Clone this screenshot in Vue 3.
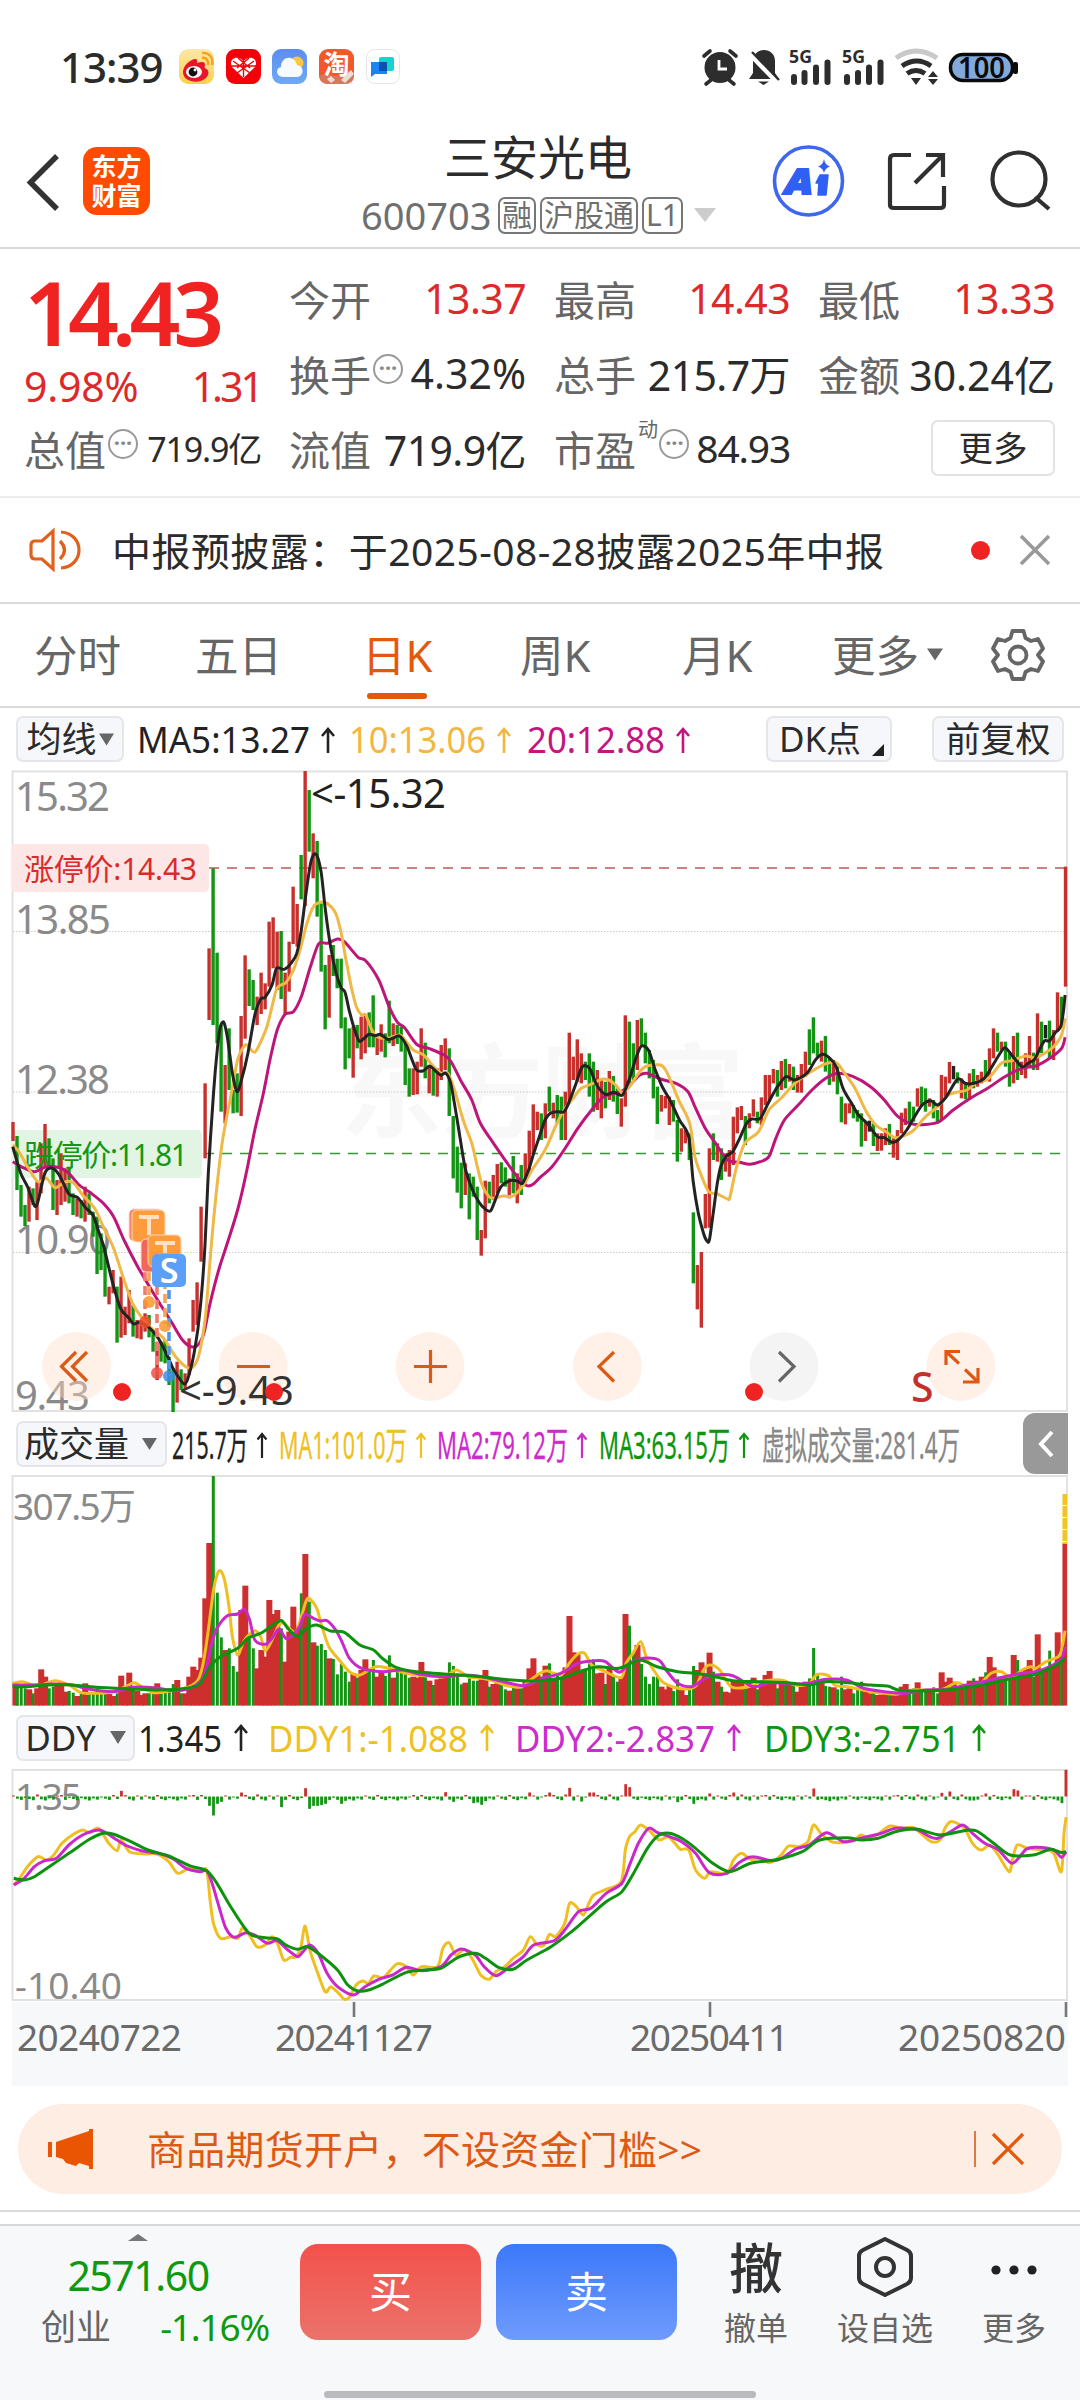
<template>
  <div class="page">
    <!-- 狀態列 -->
    <div class="status-bar">
      <span class="time">13:39</span>
      <svg class="status-apps" viewBox="179 46 222 42" width="222" height="42">
        <defs>
          <linearGradient id="wb" x1="0" y1="0" x2="0" y2="1"><stop offset="0" stop-color="#fde7a8" /><stop offset="1" stop-color="#fbd24a" /></linearGradient>
          <linearGradient id="sky" x1="0" y1="0" x2="0" y2="1"><stop offset="0" stop-color="#5d8df0" /><stop offset="1" stop-color="#6eaaf2" /></linearGradient>
        </defs>
        <rect x="179" y="49" width="35" height="35" rx="9" fill="url(#wb)" />
        <path d="M183 72c0-7 9-14 13-13 2 1 1 4 1 4s7-3 8 1c0 2-1 3 0 4 5 2 4 7 1 10-6 6-23 5-23-6z" fill="#e6162d" />
        <ellipse cx="194" cy="72" rx="8" ry="6" fill="#fff" />
        <circle cx="193" cy="72" r="4.4" fill="#111" /><circle cx="195" cy="70" r="1.4" fill="#fff" />
        <path d="M202 58c4-1 7 3 6 7M202 53c7-1 12 5 10 12" fill="none" stroke="#f7a11b" stroke-width="2.4" />
        <rect x="226" y="49" width="35" height="35" rx="9" fill="#f40009" />
        <path d="M243.500 78L232 67c-4-8 5-13 11.500-6 6.500-7 15.500-2 11.500 6z" fill="#fff" />
        <path d="M233 61l17 12M254 61l-17 12M238 58l12 10M249 58l-12 10M243.500 60v17M231 66h25" stroke="#f40009" stroke-width="1.400" />
        <rect x="272" y="49" width="35" height="35" rx="9" fill="url(#sky)" />
        <circle cx="297" cy="63" r="6.500" fill="#fbc646" />
        <path d="M283 77c-7 0-8-9-2-10 0-11 13-13 16-2 9 2 6 12 0 12z" fill="#f7fbff" />
        <rect x="319" y="49" width="35" height="35" rx="9" fill="#f1592a" />
        <path d="M319 76q8-4 14 0 10 0 14-7l7 8q-1 7-9 7h-17q-8 0-9-8z" fill="#d9775c" />
        <text x="336.500" y="74" font-size="26" font-weight="700" fill="#fff" text-anchor="middle">淘</text>
        <path d="M341 80l10-10 3 4-9 9zM327 79l4-3 4 4-4 3z" fill="#ecdcd4" />
        <rect x="366.500" y="49.500" width="33" height="34" rx="8" fill="#fff" stroke="#e6e6e6" />
        <rect x="379" y="57" width="15" height="14" rx="2" fill="#15d3cf" />
        <path d="M371 62h16v12h-12l-4 3z" fill="#1b83f5" />
        <rect x="379" y="62" width="8" height="9" fill="#0d50b4" />
      </svg>
      <svg class="status-icons" viewBox="698 46 326 42" width="326" height="42">
        <circle cx="720" cy="67.500" r="15.500" fill="#2d2d2d" />
        <path d="M704 56l6-5M736 56l-6-5M711 80l-5 4M729 80l5 4" stroke="#2d2d2d" stroke-width="3.600" stroke-linecap="round" />
        <path d="M719 60v9h8" fill="none" stroke="#fff" stroke-width="2.800" />
        <path d="M749 79l4-6V62c0-8 5-12 11-12 6 0 11 4 11 11v12l4 6zM758 81.500h11l-5.500 3.500z" fill="#2d2d2d" />
        <path d="M749 53l28 29" stroke="#fff" stroke-width="5" />
        <path d="M752 52l27 28" stroke="#2d2d2d" stroke-width="2.400" />
        <text x="789" y="62.500" font-size="17.500" font-weight="700" fill="#2d2d2d" textLength="23" lengthAdjust="spacingAndGlyphs">5G</text>
        <path d="M794 77v5M804.500 73v9M816 67.500v14.500M827.500 62.500v19.500" stroke="#2d2d2d" stroke-width="6" stroke-linecap="round" />
        <text x="842" y="62.500" font-size="17.500" font-weight="700" fill="#2d2d2d" textLength="23" lengthAdjust="spacingAndGlyphs">5G</text>
        <path d="M847 77v5M858 73v9M869 67.500v14.500M880.500 62.500v19.500" stroke="#2d2d2d" stroke-width="6" stroke-linecap="round" />
        <path d="M896 58q20-14 41 0" fill="none" stroke="#c9c9c9" stroke-width="5" />
        <path d="M902 66q15-10 29 0M907 73.500q9-6 18 0" fill="none" stroke="#2d2d2d" stroke-width="5" />
        <path d="M911 78h10l-5 7zM928 77l5-6 5 6zM928 79l5 6 5-6z" fill="#2d2d2d" />
        <rect x="950.500" y="54.500" width="62" height="26" rx="12.500" fill="#82a9d9" stroke="#0b0b0b" stroke-width="3.500" />
        <rect x="1013" y="62" width="5" height="12" rx="2" fill="#0b0b0b" />
        <text x="958" y="77.500" font-size="28" font-weight="600" fill="#0b0b0b" textLength="47" lengthAdjust="spacingAndGlyphs">100</text>
      </svg>
    </div>

    <!-- 標題列 -->
    <header class="nav">
      <svg class="back" viewBox="0 0 34 58" width="34" height="58"><path d="M31 3L4.500 29.500 31 56" fill="none" stroke="#333" stroke-width="5.500" /></svg>
      <div class="logo"><span>东方</span><span>财富</span></div>
      <div class="nav-title">
        <div class="stock-name">三安光电</div>
        <div class="stock-code">
          <span>600703</span>
          <b v-for="tag in tags" :key="tag">{{ tag }}</b>
          <svg viewBox="0 0 22 14" width="22" height="14"><path d="M0 0h22L11 14z" fill="#ccc" /></svg>
        </div>
      </div>
      <svg class="nav-icons" viewBox="770 142 284 78" width="284" height="78">
        <circle cx="808.500" cy="181" r="34" fill="none" stroke="#3d67ef" stroke-width="3.600" />
        <text x="785" y="194" font-size="36" font-weight="900" font-style="italic" fill="#2f60f3" textLength="28" lengthAdjust="spacingAndGlyphs" stroke="#2f60f3" stroke-width="2">A</text>
        <path d="M820 175h8l-2 20h-8l1-12h-3z" fill="#2f60f3" stroke="#2f60f3" stroke-width="1.500" stroke-linejoin="round" />
        <path d="M824 159q1 6 6 7.500-5 1.500-6 6.500-1-5-6-6.500 5-1.500 6-7.500z" fill="#2f60f3" />
        <path d="M911 155h-17q-4 0-4 4v46q0 3 4 3h46q4 0 4-3v-19M926 155h17v22M943 155l-28 28" fill="none" stroke="#303030" stroke-width="4.200" />
        <circle cx="1019" cy="179" r="26.500" fill="none" stroke="#303030" stroke-width="4.200" />
        <path d="M1035 197l14 12" stroke="#303030" stroke-width="4.200" />
      </svg>
    </header>

    <!-- 行情 -->
    <section class="quote">
      <div class="col first">
        <div class="price">14.43</div>
        <div class="cell red change"><span>9.98%</span><span>1.31</span></div>
        <div class="cell"><label>总值</label><i class="more-dot">···</i><span class="small">719.9亿</span></div>
      </div>
      <div class="col">
        <div class="cell red"><label>今开</label><span>13.37</span></div>
        <div class="cell"><label>换手</label><i class="more-dot">···</i><span class="mid">4.32%</span></div>
        <div class="cell"><label>流值</label><span>719.9亿</span></div>
      </div>
      <div class="col">
        <div class="cell red"><label>最高</label><span>14.43</span></div>
        <div class="cell"><label>总手</label><span>215.7万</span></div>
        <div class="cell"><label>市盈</label><sup>动</sup><i class="more-dot">···</i><span class="pe">84.93</span></div>
      </div>
      <div class="col">
        <div class="cell red"><label>最低</label><span>13.33</span></div>
        <div class="cell"><label>金额</label><span class="wide">30.24亿</span></div>
        <div class="cell end"><button class="btn-more">更多</button></div>
      </div>
    </section>

    <!-- 公告 -->
    <div class="notice">
      <svg viewBox="28 526 56 48" width="56" height="48">
        <path d="M53 531v38l-11-10h-7q-4 0-4-4v-10q0-4 4-4h7zM60 541q9 9 0 18M61 532c24 2 24 34 0 36" fill="none" stroke="#e0601c" stroke-width="3.200" />
      </svg>
      <span class="notice-text">中报预披露：于2025-08-28披露2025年中报</span>
      <em class="dot"></em>
      <svg class="close" viewBox="0 0 30 30" width="30" height="30"><path d="M1 1l28 28M29 1L1 29" stroke="#999" stroke-width="3.600" /></svg>
    </div>

    <!-- 週期切換 -->
    <nav class="tabs">
      <span v-for="tab in tabs" :key="tab" class="tab" @click="activeTab = tab"><span class="tab-name" :class="{ active: tab === activeTab }">{{ tab }}</span></span>
      <span class="tab">更多<svg viewBox="0 0 17 13" width="16" height="13"><path d="M0 0h17L8.500 13z" fill="#666" /></svg></span>
      <svg class="gear" viewBox="0 0 54 54" width="54" height="54">
        <path d="M21.500 3h11l2 7 5.500 3 7-2 5 9.500-5 6.500 5 6.500-5 9.500-7-2-5.500 3-2 7h-11l-2-7-5.500-3-7 2-5-9.500 5-6.500-5-6.500 5-9.500 7 2 5.500-3z" fill="none" stroke="#666" stroke-width="3.800" stroke-linejoin="round" />
        <circle cx="27" cy="27" r="8.500" fill="none" stroke="#666" stroke-width="3.800" />
      </svg>
    </nav>

    <!-- 均線 -->
    <div class="indicator ma-row">
      <button class="pick ma-pick">均线<svg viewBox="0 0 16 13" width="15" height="13"><path d="M0 0h16L8 13z" fill="#666" /></svg></button>
      <svg class="legend" viewBox="124 708 642 62" width="642" height="62">
        <g v-for="item in maLegend" :key="item.text" :fill="item.color" :stroke="item.color">
          <text :x="item.x" y="753" font-size="36" stroke="none" :textLength="item.w" lengthAdjust="spacingAndGlyphs">{{ item.text }}</text>
          <path :d="arrow(item.x + item.w + 18, 729, 24)" fill="none" stroke-width="2.600" />
        </g>
      </svg>
      <button class="pick dk">DK点<i></i></button>
      <button class="pick fq">前复权</button>
    </div>

    <!-- K 線圖 -->
    <svg class="chart" viewBox="0 770 1080 642" width="1080" height="642">
      <g class="watermark"><text x="340" y="1130" font-size="102" textLength="404">东方财富</text></g>
      <path d="M12.500 1411V771.500H1067V1411z" fill="none" stroke="#e1e1e3" stroke-width="2" />
      <path d="M13 931.500h1054M13 1092h1054M13 1252.500h1054" stroke="#ccc" stroke-dasharray="1.500 1.500" />
      <path d="M12 844h192q5 0 5 5v38q0 5-5 5H12z" fill="#fde6e6" />
      <path d="M12 1130h185q5 0 5 5v38q0 5-5 5H12z" fill="#e2f4e3" />
      <path d="M209 868h858" stroke="#ca8282" stroke-width="2" stroke-dasharray="10 8" />
      <path d="M204 1153.500h863" stroke="#349934" stroke-width="1.400" stroke-dasharray="10 8" />
      <g fill="#8a8a8a" font-size="40">
        <text v-for="p in priceLabels" :key="p.text" x="15" :y="p.y" :textLength="p.w">{{ p.text }}</text>
      </g>
      <line v-for="c in candleBars" :key="c.x" :x1="c.x" :x2="c.x" :y1="c.top" :y2="c.bottom" :stroke="c.color" stroke-width="3.400" />
      <text x="24" y="880" font-size="30" fill="#d92b2b" textLength="173">涨停价:14.43</text>
      <text x="24" y="1166" font-size="30" fill="#149714" textLength="164">跌停价:11.81</text>
      <path :d="smooth(ma20, priceY)" class="line" stroke="#bd1579" />
      <path :d="smooth(ma10, priceY)" class="line" stroke="#efb847" />
      <path :d="smooth(ma5, priceY)" class="line" stroke="#232323" />
      <!-- 買賣點標記 -->
      <g fill="none" stroke-width="3.600" stroke-dasharray="9 5">
        <path d="M145 1272v42M157 1272v100" stroke="#ef7a6d" />
        <path d="M149 1272v26M165 1280v44" stroke="#f5a44f" />
        <path d="M169 1290v86" stroke="#4f96f0" />
      </g>
      <g opacity=".85">
        <circle cx="149" cy="1302" r="6" fill="#fb972c" /><circle cx="145" cy="1322" r="6" fill="#f3512f" />
        <circle cx="165" cy="1326" r="6" fill="#fb972c" /><circle cx="157" cy="1373" r="6" fill="#ee5347" />
        <circle cx="169" cy="1376" r="6" fill="#3d8eea" />
        <rect x="129" y="1209" width="33" height="32" rx="5" fill="#f06f58" stroke="#fbd2c8" />
        <rect x="132" y="1210" width="33" height="32" rx="5" fill="#fd8a1c" stroke="#fbd2a8" />
        <rect x="141" y="1239" width="33" height="33" rx="5" fill="#ef4d40" stroke="#fbd2c8" />
        <rect x="148" y="1235" width="33" height="32" rx="5" fill="#fd8a1c" stroke="#fbd2a8" />
      </g>
      <path d="M139 1217h20M149 1217v18M155 1243h20M165 1243v10" class="mark" />
      <rect x="152" y="1254" width="34" height="33" rx="5" fill="#5b9ff8" />
      <text x="169" y="1283" class="mark-s">S</text>
      <!-- 操作按鈕 -->
      <circle v-for="b in tools" :key="b.x" :cx="b.x" cy="1366.500" r="34.500" :fill="b.gray ? '#e4e4e4' : '#ffdcc8'" fill-opacity=".42" />
      <path d="M76 1352l-14.500 14.500L76 1381M87 1352l-14.500 14.500L87 1381M237 1366.500h33M414 1366.500h33M430.500 1350v33M614 1352l-15 14.500 15 15" class="tool" />
      <path d="M779 1352l15 14.500-15 15" class="tool gray" />
      <path d="M946 1365v-13.500h14M946 1351.500l13 12M978 1368v14h-15M978 1382l-13-12.500" class="tool" />
      <text x="311" y="808" font-size="40" fill="#222" textLength="135">&lt;-15.32</text>
      <text x="179" y="1405" font-size="40" fill="#333" textLength="115">&lt;-9.43</text>
      <circle v-for="x in [122, 274, 754]" :key="x" :cx="x" cy="1392" r="9" fill="#f02323" />
      <text x="911" y="1402" font-size="41" font-weight="500" fill="#c5302d">S</text>
    </svg>

    <!-- 成交量 -->
    <div class="indicator">
      <button class="pick vol-pick">成交量<svg viewBox="0 0 15 12" width="15" height="12"><path d="M0 0h15L7.500 12z" fill="#666" /></svg></button>
      <svg class="legend" viewBox="167 1412 856 63" width="856" height="63">
        <g v-for="item in volLegend" :key="item.text" :fill="item.color" :stroke="item.color">
          <text :x="item.x" y="1459" font-size="37.500" stroke-width=".3" :textLength="item.w" lengthAdjust="spacingAndGlyphs">{{ item.text }}</text>
          <path v-if="!item.plain" :d="arrow(item.x + item.w + 14, 1434, 24, 4.5)" fill="none" stroke-width="2.200" />
        </g>
      </svg>
      <div class="drawer"><svg viewBox="0 0 16 28" width="16" height="28"><path d="M14 2L3 14l11 12" fill="none" stroke="#fff" stroke-width="4" /></svg></div>
    </div>
    <svg class="chart" viewBox="0 1475 1080 231" width="1080" height="231">
      <path d="M12.500 1705.500V1476H1067v229.500z" fill="none" stroke="#e1e1e3" stroke-width="2" />
      <text x="13" y="1520" font-size="37" fill="#8a8a8a" textLength="123">307.5万</text>
      <rect v-for="v in volumeBars" :key="v.x" :x="v.x" :y="v.y" :width="v.w" :height="1705.5 - v.y" :fill="v.color" />
      <path d="M1064.700 1494v50" stroke="#f2c51d" stroke-width="4.500" stroke-dasharray="11 1" />
      <path :d="smooth(vol1, volY)" class="line" stroke="#efbf20" />
      <path :d="smooth(vol2, volY)" class="line" stroke="#cb28cb" />
      <path :d="smooth(vol3, volY)" class="line" stroke="#0c920c" />
    </svg>

    <!-- DDY -->
    <div class="indicator">
      <button class="pick ddy-pick">DDY<svg viewBox="0 0 16 13" width="16" height="13"><path d="M0 0h16L8 13z" fill="#666" /></svg></button>
      <svg class="legend" viewBox="135 1706 933 63" width="933" height="63">
        <g v-for="item in ddyLegend" :key="item.text" :fill="item.color" :stroke="item.color">
          <text :x="item.x" y="1751.500" font-size="37" stroke="none" :textLength="item.w" lengthAdjust="spacingAndGlyphs">{{ item.text }}</text>
          <path :d="arrow(item.x + item.w + 19, 1726, 25)" fill="none" stroke-width="2.600" />
        </g>
      </svg>
    </div>
    <svg class="chart" viewBox="0 1769 1080 233" width="1080" height="233">
      <path d="M12.500 2000V1770H1067v230z" fill="none" stroke="#e1e1e3" stroke-width="2" />
      <text x="15" y="1810" font-size="37" fill="#8a8a8a" textLength="67">1.35</text>
      <text x="15" y="1999" font-size="37" fill="#8a8a8a" textLength="107">-10.40</text>
      <rect v-for="d in ddyBars" :key="d.x" :x="d.x" :y="d.y" width="2.800" :height="d.h" :fill="d.color" />
      <path :d="smooth(ddy1, ddyY, 1.452)" class="line" stroke="#efbf20" />
      <path :d="smooth(ddy2, ddyY, 1.452)" class="line" stroke="#cb28cb" />
      <path :d="smooth(ddy3, ddyY, 1.452)" class="line" stroke="#0c920c" />
    </svg>
    <svg class="axis" viewBox="12 2002 1056 84" width="1056" height="84">
      <path d="M354 2002v15M710 2002v15M1066 2002v15" stroke="#777" stroke-width="2.600" />
      <text v-for="d in dates" :key="d.text" :x="d.x" y="2051" font-size="37" fill="#6a6a6a" :textLength="d.w">{{ d.text }}</text>
    </svg>

    <!-- 廣告 -->
    <div class="promo">
      <svg viewBox="46 2126 50 44" width="50" height="44"><path d="M48 2141h4v15h-4zM56 2141l33-11v-2h4v40h-4v-3l-10-3-3 3-10-3-3-4-7-2z" fill="#ea5504" /></svg>
      <span>商品期货开户，不设资金门槛&gt;&gt;</span>
      <i></i>
      <svg viewBox="0 0 34 34" width="34" height="34"><path d="M2 2l30 30M32 2L2 32" stroke="#e5570a" stroke-width="3.200" /></svg>
    </div>

    <!-- 底部交易列 -->
    <footer class="trade">
      <div class="index">
        <svg viewBox="0 0 20 7" width="20" height="7"><path d="M0 7L10 0l10 7z" fill="#777" /></svg>
        <div class="index-price">2571.60</div>
        <div class="index-row"><label>创业</label><span>-1.16%</span></div>
      </div>
      <button class="btn buy">买</button>
      <button class="btn sell">卖</button>
      <div class="action cancel"><b>撤</b><span>撤单</span></div>
      <div class="action optional">
        <svg viewBox="0 0 56 60" width="56" height="60"><path d="M28 2l22 11q4 2 4 6v22q0 4-4 6L28 58 6 47q-4-2-4-6V19q0-4 4-6z" fill="none" stroke="#333" stroke-width="4" stroke-linejoin="round" /><circle cx="28" cy="30" r="9" fill="none" stroke="#333" stroke-width="4" /></svg>
        <span>设自选</span>
      </div>
      <div class="action others">
        <svg viewBox="0 0 48 60" width="48" height="60"><circle cx="6" cy="33" r="4.600" fill="#222" /><circle cx="24" cy="33" r="4.600" fill="#222" /><circle cx="42" cy="33" r="4.600" fill="#222" /></svg>
        <span>更多</span>
      </div>
      <div class="home-bar"></div>
    </footer>
  </div>
</template>

<script setup>
import { ref } from 'vue'

const RED = '#c7302d'
const GREEN = '#149414'

const tags = ['融', '沪股通', 'L1']
const tabs = ['分时', '五日', '日K', '周K', '月K']
const activeTab = ref('日K')

const maLegend = [
  { text: 'MA5:13.27', x: 137, w: 173, color: '#222' },
  { text: '10:13.06', x: 349, w: 137, color: '#f2b742' },
  { text: '20:12.88', x: 527, w: 138, color: '#c4157f' },
]
const volLegend = [
  { text: '215.7万', x: 172, w: 76, color: '#222' },
  { text: 'MA1:101.0万', x: 279, w: 128, color: '#eec11f' },
  { text: 'MA2:79.12万', x: 437, w: 131, color: '#cc2ccc' },
  { text: 'MA3:63.15万', x: 599, w: 131, color: '#0c960c' },
  { text: '虚拟成交量:281.4万', x: 762, w: 198, color: '#888', plain: true },
]
const ddyLegend = [
  { text: '1.345', x: 138, w: 84, color: '#222' },
  { text: 'DDY1:-1.088', x: 268, w: 200, color: '#eec11f' },
  { text: 'DDY2:-2.837', x: 515, w: 200, color: '#cc2ccc' },
  { text: 'DDY3:-2.751', x: 764, w: 196, color: '#0c960c' },
]
const priceLabels = [
  { text: '15.32', y: 811, w: 95 },
  { text: '13.85', y: 934, w: 96 },
  { text: '12.38', y: 1094, w: 95 },
  { text: '10.90', y: 1254, w: 96 },
  { text: '9.43', y: 1410, w: 75 },
]
const dates = [
  { text: '20240722', x: 17, w: 165 },
  { text: '20241127', x: 275, w: 158 },
  { text: '20250411', x: 630, w: 159 },
  { text: '20250820', x: 898, w: 168 },
]
const tools = [{ x: 76.5 }, { x: 253 }, { x: 430 }, { x: 607.5 }, { x: 784, gray: true }, { x: 961 }]

// 座標換算
const priceY = (v) => 760 + v / 3
const volY = (v) => 1410 + v / 3
const ddyY = (v) => 1700 + v / 3

const arrow = (x, y, h, r = 6) => `M${x} ${y + h}V${y}M${x - r} ${y + r + 1}L${x} ${y}L${x + r} ${y + r + 1}`

// 平滑曲線 (Catmull-Rom)
const smooth = (text, toY, scale = 2.904) => {
  const pts = text.trim().split(/\s+/).map((s) => {
    const [x, y] = s.split(',').map(Number)
    return [x / scale, toY(y)]
  })
  let d = `M${pts[0][0].toFixed(1)} ${pts[0][1].toFixed(1)}`
  for (let i = 0; i < pts.length - 1; i++) {
    const a = pts[Math.max(i - 1, 0)]
    const b = pts[i]
    const c = pts[i + 1]
    const e = pts[Math.min(i + 2, pts.length - 1)]
    const n = [b[0] + (c[0] - a[0]) / 7, b[1] + (c[1] - a[1]) / 7, c[0] - (e[0] - b[0]) / 7, c[1] - (e[1] - b[1]) / 7, c[0], c[1]]
    d += 'C' + n.map((v) => v.toFixed(1)).join(' ')
  }
  return d
}

// 每日最高、最低，R 漲 G 跌 K 平
const candles = `
R1086-1143 G1128-1290 G1275-1370 G1335-1398 R1280-1385 G1285-1335 R1265-1380 R1150-1300 R1092-1220 G1135-1220
G1195-1350 R1260-1365 R1180-1335 R1225-1325 G1220-1330 G1300-1365 R1315-1370 G1320-1375 R1280-1385 G1300-1365
G1355-1430 G1370-1542 G1420-1530 G1460-1610 R1580-1633 R1530-1600 G1580-1748 R1550-1733 R1640-1725 R1590-1690
G1635-1730 R1680-1735 R1680-1738 R1660-1715 G1665-1732 G1710-1775 R1745-1860 G1745-1805 G1740-1810 G1790-1875
G1825-1958 R1805-1928 G1828-1890 R1840-1890 R1735-1845 R1620-1715 R1567-1695 R1340-1505 R970-1195 R565-780
G325-795 G578-850 G795-1055 R915-1090 G805-990 G990-1060 G940-1058 R768-1068 R586-836 G628-738
G660-750 R710-795 R638-762 R670-748 R485-680 R472-625 R515-690 G513-717 R638-765 R545-695
R380-552 R432-560 G285-418 R33-438 G90-275 R220-355 G243-470 G430-635 G615-808 R585-773
G555-648 G596-685 G596-805 G772-928 G805-895 R800-953 G795-865 R770-898 R765-880 G757-862
G706-862 R825-885 R793-875 G820-892 G722-850 R790-858 G795-852 G800-875 G850-975 G925-1010
R925-1005 R905-1003 R805-920 G848-955 R920-1000 G930-1007 R925-1010 R855-960 R835-930 G865-1068
G1068-1255 G1160-1298 G1208-1345 R1210-1305 G1240-1378 G1250-1310 G1280-1440 R1410-1487 R1262-1435 G1265-1330
R1245-1320 R1212-1300 G1207-1270 G1222-1280 R1255-1315 G1188-1300 R1240-1330 G1215-1305 R1180-1270 R1112-1235
R1033-1180 R1055-1110 G1060-1140 R1030-1135 G980-1055 R1028-1075 G1005-1090 G1010-1140 R995-1140 R818-1030
R890-960 R838-965 R880-970 G905-960 G880-1010 G905-1055 R930-1050 R960-1075 G965-1045 R933-1020
G948-1025 G985-1062 R1015-1100 R766-1040 G785-970 G850-960 R780-930 G775-855 G818-910 G870-955
G900-1015 G980-1092 R1005-1055 R1008-1045 R1010-1095 G1020-1085 G1080-1205 R1105-1175 R1110-1150 G1120-1200
G1357-1570 R1515-1648 R1476-1703 R1302-1405 R1165-1403 G1120-1200 R1150-1205 G1165-1260 R1180-1235 R1170-1250
R1070-1215 R1042-1120 R1038-1080 G1068-1155 R1060-1105 R1018-1070 G1055-1090 R1012-1095 R945-1035 R945-1025
R927-970 G930-1010 R903-990 G897-985 R912-965 G920-990 R945-998 R912-998 R875-950 G808-915
G772-880 G848-890 R842-905 G828-935 G895-975 R900-965 G920-1003 G1010-1087 R1030-1093 R1030-1060
G1035-1075 G1050-1085 G1060-1160 R1085-1143 K1082-1115 G1090-1158 R1120-1173 R1120-1172 R1105-1155 G1092-1155
R1135-1193 R1110-1200 R1058-1120 R1045-1095 G1025-1090 G1040-1085 R985-1040 G980-1035 G985-1055 R1015-1040
G1020-1075 G1050-1090 R945-1080 R950-1010 R906-970 K918-958 G937-970 R955-1015 G970-1018 R940-1020
G927-985 R945-980 R935-970 G900-950 R865-965 R805-895 G818-875 R845-870 G845-920 G880-980
R828-970 G818-960 R905-945 R880-955 R828-920 G878-930 R760-930 G785-880 K795-835 G782-895
R810-900 R697-815 G710-800 R320-680`.trim().split(/\s+/)

const colors = { R: RED, G: GREEN, K: '#222' }
const candleBars = candles.map((s, i) => {
  const [top, bottom] = s.slice(1).split('-').map(Number)
  return { x: 13 + i * 4.002, top: priceY(top), bottom: priceY(bottom), color: colors[s[0]] }
})

const volumes = `
820 830 832 835 838 850 835 778 800 835 830 820 815 845 843 848 858 845 820 850 848 828 845 845 852 858 850 797 830 788
840 843 855 850 850 845 820 850 845 843 822 810 850 850 800 770 780 743 565 399 198 548 682 720 715 768 785 600 527 672
715 775 720 740 570 612 600 655 755 665 590 650 550 432 575 697 707 702 720 745 747 793 762 785 815 790 803 780 748 780
750 800 785 798 736 803 780 785 790 803 800 803 756 795 812 825 808 805 800 757 768 790 823 818 805 812 812 808 780 830
822 820 822 838 842 830 835 835 810 775 745 795 800 767 760 803 795 800 772 618 727 730 780 782 760 748 790 788 822 772
800 815 805 612 647 730 705 762 800 822 800 800 830 838 828 843 808 835 855 833 768 780 757 790 728 785 815 830 845 848
815 812 812 835 810 803 838 815 795 783 815 835 810 810 820 825 845 830 815 805 714 795 820 828 830 832 838 800 838 835
850 835 815 838 850 845 855 853 850 853 853 845 830 822 838 835 817 838 842 843 832 850 787 815 803 815 835 835 832 812
805 812 800 787 741 772 800 805 805 800 735 750 790 775 750 800 673 785 780 722 765 667 740 400`.trim().split(/\s+/).map(Number)

// 紅柱較寬，綠柱較窄
const volumeBars = volumes.map((v, i) => {
  const up = candles[i][0] !== 'G' && i !== 263
  const last = i === 263
  const w = up ? 6 : last ? 4.5 : 3
  const center = last ? 1064.7 : 13.2 + i * 4.002
  const x = Math.max(center - w / 2, 12.5)
  return { x, y: volY(v), w, color: up || last ? '#cc2f2d' : GREEN }
})

const ddySpikes = {
  27: 17, 28: 4, 49: -28, 50: -57, 51: -22, 52: -16, 57: 12, 67: -32, 73: 25, 74: -37, 75: -28, 76: -28, 77: -26, 78: -22,
  81: -10, 82: -22, 83: -13, 108: 13, 110: -16, 115: -20, 116: -18, 117: -25, 118: -14, 129: 12, 134: 12, 139: 26, 142: -15,
  144: 12, 145: 12, 153: 37, 154: 28, 166: -17, 170: -22, 171: -11, 174: 9, 180: 12, 200: 24, 201: -10, 204: -14, 232: 11,
  234: 15, 240: -12, 243: 9, 250: 22, 251: 18, 254: 3, 261: -12, 262: -20, 263: 80,
}
const ddyBars = candles.map((c, i) => {
  const wave = (i * 37) % 11
  const h = ddySpikes[i] ?? (c[0] === 'G' || wave > 4 ? -(3 + wave * 0.9) : 3 + (wave % 3) * 1.5)
  const px = Math.abs(h) / 3
  return { x: 12 + i * 4.002, y: h > 0 ? 1796.5 - px : 1796.5, h: px, color: h > 0 ? RED : GREEN }
})

const ma5 = `37,1160 60,1240 80,1280 100,1337 110,1325 130,1240 150,1224 172,1245 200,1302 225,1312 250,1345 270,1365 285,1410 300,1455
325,1560 350,1645 375,1675 388,1692 405,1687 430,1700 460,1735 485,1785 505,1830 535,1872 550,1840 567,1760 580,1660 594,1480
605,1240 620,1000 632,860 640,800 650,787 660,830 675,940 688,995 700,965 720,880 740,765 757,717 770,712 790,675 803,625 825,628
845,610 862,580 875,510 890,390 902,310 912,283 922,290 933,340 945,450 960,560 975,635 990,682 1002,697 1015,755 1030,810
1043,843 1055,837 1072,823 1090,827 1105,823 1125,838 1140,835 1160,828 1180,855 1195,895 1210,930 1230,932 1247,918 1262,930
1280,945 1295,940 1310,975 1330,1095 1350,1220 1370,1285 1390,1325 1410,1348 1425,1352 1440,1315 1455,1280 1480,1262 1500,1262
1517,1270 1535,1230 1550,1180 1568,1125 1583,1080 1598,1060 1618,1055 1638,1055 1653,1025 1673,970 1688,925 1701,917 1715,930
1733,975 1758,1003 1783,997 1808,1005 1830,950 1848,890 1863,858 1883,870 1903,930 1923,980 1948,1025 1973,1080 2000,1130
2013,1265 2028,1360 2043,1420 2053,1443 2060,1440 2071,1360 2083,1270 2093,1220 2108,1190 2128,1175 2148,1135 2168,1090
2183,1077 2208,1075 2233,1025 2258,980 2283,950 2308,960 2343,940 2368,900 2388,883 2408,893 2428,920 2448,985 2473,1030
2493,1065 2518,1090 2548,1130 2568,1133 2590,1147 2608,1140 2633,1110 2653,1075 2678,1035 2703,1022 2723,1035 2748,1010
2781,957 2803,970 2828,970 2858,955 2878,925 2898,890 2918,863 2938,885 2968,920 2988,908 3003,900 3018,870 3033,843 3048,842
3063,820 3080,800 3088,755 3093,705`
const ma10 = `37,1155 55,1175 80,1220 110,1265 135,1255 160,1283 190,1265 215,1270 240,1305 275,1345 300,1400 330,1465 360,1560
385,1630 410,1670 440,1705 475,1735 510,1790 545,1823 565,1815 580,1775 597,1665 610,1500 625,1330 645,1150 670,1010 690,900
712,855 725,865 740,877 755,850 775,800 790,740 805,683 830,668 850,635 870,575 890,495 910,440 930,427 950,430 975,460 990,515
1003,590 1020,680 1035,740 1050,765 1062,765 1080,810 1095,830 1125,835 1160,825 1180,845 1200,870 1230,885 1255,915 1280,940
1300,940 1320,990 1345,1080 1370,1150 1385,1215 1400,1275 1420,1310 1435,1315 1460,1308 1490,1308 1520,1275 1545,1230
1568,1195 1588,1160 1613,1100 1638,1050 1668,1010 1688,985 1718,972 1748,958 1768,960 1788,975 1806,997 1828,980 1858,935
1878,918 1918,915 1933,930 1953,975 1973,1025 2003,1090 2018,1190 2038,1250 2058,1295 2083,1302 2113,1317 2120,1310 2138,1225
2163,1150 2203,1115 2233,1050 2268,1015 2308,970 2348,940 2393,913 2428,908 2453,940 2483,985 2513,1050 2543,1095 2573,1115
2603,1133 2648,1115 2688,1070 2723,1040 2758,1003 2808,990 2838,965 2868,958 2908,910 2938,902 2978,888 3008,893 3048,870
3068,850 3083,825 3093,775`
const ma20 = `37,1205 65,1222 100,1235 130,1222 160,1220 195,1235 230,1275 265,1300 300,1330 330,1370 360,1440 400,1520 440,1590
470,1640 500,1690 530,1740 555,1760 575,1755 592,1720 610,1630 635,1530 660,1450 690,1350 715,1240 740,1110 765,1000 785,895
805,810 828,763 852,755 875,710 900,625 925,552 950,550 980,537 1000,545 1040,592 1062,602 1100,660 1130,740 1155,788 1175,803
1210,853 1245,865 1290,885 1310,905 1340,965 1370,1020 1395,1090 1430,1145 1470,1205 1510,1260 1530,1277 1548,1273 1568,1253
1603,1220 1638,1170 1678,1105 1718,1050 1753,1010 1803,995 1833,970 1858,945 1878,940 1918,957 1963,970 1998,995 2018,1040
2048,1105 2078,1150 2113,1200 2148,1207 2178,1213 2208,1205 2233,1190 2253,1135 2278,1080 2318,1035 2358,990 2398,955 2433,940
2478,950 2528,980 2568,1020 2608,1070 2653,1093 2723,1087 2768,1050 2818,1015 2868,985 2918,950 2968,925 3008,918 3048,895
3083,865 3093,832`
const vol1 = `37,820 65,815 95,825 120,825 160,812 200,825 235,848 270,850 310,848 340,840 365,830 390,818 415,832 445,848 480,845
520,838 550,830 575,810 590,760 605,660 620,540 632,490 641,483 652,510 665,590 675,680 690,735 710,690 740,662 757,680 770,723
790,690 810,645 825,640 845,660 860,665 875,620 890,570 900,567 920,595 935,650 955,710 985,750 1015,785 1045,795 1090,770
1130,775 1180,790 1230,797 1290,800 1325,780 1360,800 1400,805 1440,815 1475,828 1515,830 1540,810 1568,790 1588,782 1608,790
1633,792 1653,760 1678,732 1698,730 1718,765 1748,780 1803,803 1818,760 1838,730 1861,695 1878,745 1898,780 1923,815 1958,832
1998,837 2023,825 2043,780 2061,765 2088,778 2123,830 2168,832 2208,815 2268,810 2308,825 2348,822 2373,793 2408,798 2423,825
2468,832 2528,845 2568,850 2608,852 2648,840 2698,840 2738,838 2778,818 2813,830 2848,820 2878,790 2908,785 2938,803 2968,780
2993,770 3008,775 3038,755 3073,740 3083,720 3093,662`
const vol2 = `37,825 100,825 150,822 210,825 260,838 330,845 380,832 450,833 500,842 550,835 585,810 600,770 615,700 630,655 660,617
690,612 710,597 725,630 740,690 770,703 790,685 810,657 830,685 850,675 870,650 885,613 910,625 930,633 950,632 975,660 995,700
1015,745 1050,775 1110,785 1170,780 1220,793 1290,800 1350,795 1400,800 1450,812 1520,827 1568,810 1578,803 1628,790 1678,760
1728,752 1758,755 1798,787 1828,760 1868,745 1913,750 1938,785 1968,820 2008,830 2048,805 2078,795 2128,797 2188,830 2238,818
2308,822 2348,820 2398,808 2458,810 2508,835 2568,845 2628,850 2688,840 2748,838 2808,825 2868,812 2918,800 2968,790 3008,785
3058,765 3083,745 3093,710`
const vol3 = `37,830 80,830 140,825 210,825 280,832 380,837 460,840 540,835 580,822 610,770 640,740 690,715 720,685 760,668 800,640
818,632 840,660 865,680 890,655 920,645 960,663 1000,667 1045,705 1085,720 1110,745 1150,772 1210,785 1330,795 1400,800 1460,808
1520,812 1568,812 1628,805 1688,783 1738,770 1798,775 1858,750 1908,770 1968,785 2018,790 2068,798 2128,812 2208,815 2288,818
2348,825 2398,815 2448,817 2528,825 2578,828 2608,840 2668,843 2748,840 2808,832 2868,822 2928,808 2998,795 3038,780 3068,765
3093,745`
const ddy1 = `20,555 30,530 40,500 55,470 68,480 78,465 90,430 105,405 120,390 130,398 143,385 158,430 170,452 176,420 188,455 210,462
228,462 245,485 258,520 275,505 290,515 300,510 305,600 310,670 320,715 335,710 345,715 352,685 362,705 373,740 385,735 395,710
403,730 412,780 422,772 430,770 437,740 443,678 450,750 458,800 472,875 480,860 492,880 500,898 508,890 517,855 527,843 535,850
543,828 557,832 576,792 590,800 600,825 612,800 635,800 643,745 652,728 662,765 675,748 688,785 698,825 710,838 720,815 733,800
745,775 760,750 770,710 780,735 790,735 798,703 807,710 820,670 827,610 837,620 847,645 855,610 862,585 880,568 902,545 908,450
914,410 922,395 930,375 942,390 957,420 970,410 980,430 988,448 1000,450 1010,510 1023,535 1032,515 1055,520 1065,480 1077,460
1090,478 1105,475 1117,488 1132,470 1145,438 1160,440 1173,425 1181,375 1192,400 1207,425 1222,428 1240,420 1250,405 1260,412
1275,402 1292,378 1310,385 1325,382 1337,400 1352,425 1365,420 1372,385 1380,365 1392,372 1402,390 1412,430 1425,450 1437,435
1448,460 1465,515 1470,480 1477,435 1492,445 1515,450 1530,460 1541,515 1545,400 1548,352`
const ddy2 = `20,555 35,535 50,500 65,482 82,475 100,435 120,405 143,390 155,400 170,420 185,438 205,452 230,460 250,475 270,505
290,515 300,512 308,550 318,620 328,685 340,712 357,698 370,705 388,730 402,722 418,750 432,770 440,755 450,735 462,760 475,820
490,860 513,885 530,860 550,838 570,825 590,802 612,812 640,800 655,765 670,747 690,765 703,800 720,827 740,800 760,770 775,735
805,722 820,690 840,635 858,625 880,580 903,550 915,490 927,430 942,385 955,398 975,412 990,425 1010,460 1030,518 1055,520
1075,485 1093,470 1120,482 1135,475 1155,447 1175,435 1200,398 1225,425 1250,415 1280,400 1300,385 1330,388 1350,410 1362,415
1380,395 1398,375 1412,400 1430,430 1450,450 1470,490 1490,448 1505,442 1530,450 1541,472 1548,455`
const ddy3 = `20,535 35,540 50,530 75,495 100,460 130,418 150,400 165,403 190,425 215,450 245,468 275,497 300,512 315,550 335,620
362,700 385,713 403,717 415,735 432,748 447,740 465,765 490,810 505,855 520,873 535,870 555,853 590,817 615,810 640,805 665,772
690,760 705,775 725,803 745,808 765,780 800,740 830,695 855,650 880,605 903,575 920,520 940,445 957,405 972,400 990,415 1010,445
1035,490 1060,515 1090,490 1130,478 1165,455 1190,420 1230,413 1250,420 1275,415 1300,395 1330,387 1365,405 1400,392 1417,392
1440,425 1467,465 1500,465 1525,448 1540,457 1548,455`
</script>

<style>
body {
  margin: 0;
  background: #fff;
}
</style>

<style scoped>
* {
  box-sizing: border-box;
}

.page {
  width: 1080px;
  height: 2400px;
  overflow: hidden;
  background: #fff;
  color: #2b2b2b;
  font-family: 'Noto Sans', 'Noto Sans CJK SC', sans-serif;
  white-space: nowrap;
}

svg {
  display: block;
  flex: none;
}

button {
  padding: 0;
  font-family: inherit;
  color: #2b2b2b;
}

/* 狀態列 */
.status-bar {
  height: 112px;
  padding: 46px 56px 0 60px;
  display: flex;
  align-items: flex-start;
}

.time {
  width: 119px;
  font-size: 42px;
  line-height: 42px;
  font-weight: 500;
  letter-spacing: -1px;
}

.status-icons {
  margin-left: auto;
}

/* 標題列 */
.nav {
  height: 137px;
  padding: 18px 26px 0 26px;
  display: flex;
  border-bottom: 2px solid #dadada;
}

.back {
  margin-top: 23px;
}

.logo {
  width: 67px;
  height: 68px;
  margin: 17px 0 0 23px;
  border-radius: 14px;
  background: #ff4a00;
  color: #fff;
  font-size: 25px;
  line-height: 29px;
  font-weight: 600;
  display: flex;
  flex-direction: column;
  align-items: center;
  justify-content: center;
}

.nav-title {
  flex: 1;
  padding-left: 211px;
}

.stock-name {
  margin-left: 83px;
  height: 57px;
  font-size: 47px;
  line-height: 54px;
}

.stock-code {
  display: flex;
  align-items: center;
  gap: 4px;
  height: 56px;
  color: #6f6f6f;
  font-size: 38px;
}

.stock-code span {
  width: 133px;
}

.stock-code b {
  height: 37px;
  padding: 0 2px;
  border: 2px solid #777;
  border-radius: 7px;
  font-size: 30px;
  line-height: 31px;
  font-weight: 400;
}

.stock-code svg {
  margin-left: 7px;
}

.nav-icons {
  margin-top: 12px;
}

/* 行情 */
.quote {
  height: 249px;
  padding: 11px 25px 0 24px;
  display: grid;
  grid-template-columns: 237px 237px 236px 237px;
  column-gap: 28px;
  border-bottom: 2px solid #ececec;
}

.cell {
  height: 75px;
  display: flex;
  align-items: center;
  justify-content: space-between;
  font-size: 41px;
  letter-spacing: -0.6px;
}

.cell label {
  color: #666;
  letter-spacing: 0;
}

.cell .mid {
  font-size: 41px;
  letter-spacing: 0;
}

.cell .pe {
  font-size: 39px;
  letter-spacing: -1.2px;
}

.cell .wide {
  letter-spacing: 0;
}

.cell .small {
  font-size: 34px;
  letter-spacing: -1.2px;
}

.red span {
  color: #dc2a2a;
}

.price {
  height: 102px;
  font-size: 89px;
  line-height: 104px;
  font-weight: 600;
  letter-spacing: -7px;
  color: #f02323;
}

.change {
  height: 48px;
  letter-spacing: -0.2px;
}

.change span:last-child {
  letter-spacing: -3px;
}

.more-dot {
  width: 30px;
  height: 30px;
  border: 2.500px solid #999;
  border-radius: 50%;
  color: #888;
  font-size: 22px;
  line-height: 23px;
  font-style: normal;
  font-weight: 700;
  text-align: center;
  letter-spacing: 0;
}

.cell .more-dot {
  margin: -8px auto 0 2px;
}

.cell sup {
  font-size: 20px;
  color: #666;
  margin: -38px 0 0 2px;
}

.cell.end {
  justify-content: flex-end;
}

.btn-more {
  width: 124px;
  height: 56px;
  border: 2px solid #e2e2e2;
  border-radius: 7px;
  background: #fff;
  font-size: 34.500px;
  line-height: 48px;
}

/* 公告 */
.notice {
  height: 106px;
  padding: 0 30px 0 28px;
  display: flex;
  align-items: center;
  border-bottom: 2px solid #dadada;
}

.notice-text {
  flex: 1;
  margin: -3px 0 0 28px;
  font-size: 39px;
  letter-spacing: 0.45px;
}

.dot {
  width: 19px;
  height: 19px;
  margin-right: 30px;
  border-radius: 50%;
  background: #f02323;
}

/* 週期切換 */
.tabs {
  height: 104px;
  padding-left: 34px;
  display: grid;
  grid-template-columns: 161px 167px 158px 162px 150px 159px 54px;
  align-items: center;
  border-bottom: 2px solid #dadada;
}

.tab {
  height: 102px;
  display: flex;
  align-items: center;
  font-size: 43.500px;
  line-height: 104px;
  color: #666;
}

.tab svg {
  margin: -2px 0 0 8px;
}

.tab-name {
  position: relative;
}

.tab-name.active {
  color: #e5570a;
}

.tab-name.active::after {
  content: '';
  position: absolute;
  left: 50%;
  bottom: 8px;
  width: 60px;
  height: 6px;
  margin-left: -30px;
  border-radius: 3px;
  background: #e5570a;
}

/* 指標列 */
.indicator {
  height: 63px;
  padding: 0 12px 0 16px;
  display: flex;
  align-items: center;
}

.ma-row {
  height: 62px;
}

.pick {
  height: 46px;
  border: 2px solid #e4e6ea;
  border-radius: 7px;
  background: #f6f7fa;
  font-size: 35px;
  line-height: 40px;
  display: flex;
  align-items: center;
  justify-content: center;
  flex: none;
}

.ma-pick {
  width: 108px;
  gap: 2px;
}

.vol-pick {
  width: 151px;
  gap: 13px;
  padding-right: 2px;
}

.ddy-pick {
  width: 119px;
  gap: 14px;
}

.dk {
  width: 126px;
  position: relative;
  padding-right: 18px;
}

.dk i {
  position: absolute;
  right: 6px;
  bottom: 4px;
  border-left: 12px solid transparent;
  border-bottom: 12px solid #222;
}

.fq {
  width: 132px;
  margin-left: 40px;
}

.drawer {
  width: 45px;
  height: 61px;
  border-radius: 12px 0 0 12px;
  background: #999;
  display: flex;
  align-items: center;
  justify-content: center;
}

.line {
  fill: none;
  stroke-width: 3;
  stroke-linejoin: round;
}

.watermark {
  fill: #f8f8f8;
  font-weight: 700;
}

.mark {
  fill: none;
  stroke: #ffe0c4;
  stroke-width: 4;
}

.mark-s {
  fill: #fff;
  font-size: 34px;
  font-weight: 600;
  text-anchor: middle;
}

.tool {
  fill: none;
  stroke: #dc5a14;
  stroke-width: 3.200;
}

.tool.gray {
  stroke: #666;
}

.axis {
  margin-left: 12px;
  background: #f7f8fa;
}

/* 廣告 */
.promo {
  width: 1044px;
  height: 90px;
  margin: 18px 18px 0;
  padding: 0 37px 0 28px;
  border-radius: 45px;
  background: #fdede3;
  display: flex;
  align-items: center;
  color: #dd5a14;
  font-size: 39px;
}

.promo span {
  flex: 1;
  margin: -5px 0 0 51px;
  letter-spacing: 0.25px;
}

.promo i {
  width: 2px;
  height: 36px;
  margin-right: 15px;
  background: #dd7a45;
}

/* 底部交易列 */
.trade {
  position: relative;
  height: 190px;
  margin-top: 16px;
  border-top: 2px solid #dadada;
  background: linear-gradient(#fff 12px, #d6d8dc 12px, #d6d8dc 14px, #f7f8fa 14px);
  display: flex;
  align-items: flex-start;
}

.index {
  width: 300px;
  padding: 22px 31px 0 41px;
}

.index svg {
  margin-left: 87px;
}

.index-price {
  width: 194px;
  height: 69px;
  font-size: 41px;
  line-height: 68px;
  letter-spacing: -1.500px;
  text-align: center;
  color: #0e9a0e;
}

.index-row {
  display: flex;
  justify-content: space-between;
  font-size: 37px;
  line-height: 34px;
  letter-spacing: -1.2px;
  color: #0e9a0e;
}

.index-row label {
  font-size: 35px;
  letter-spacing: 0;
  color: #666;
}

.btn {
  width: 181px;
  height: 96px;
  margin: 32px 15px 0 0;
  border: none;
  border-radius: 18px;
  color: #fff;
  font-size: 43px;
  line-height: 94px;
}

.buy {
  background: linear-gradient(#f3514b, #eb736b);
}

.sell {
  background: linear-gradient(#3b78f9, #6f9bfd);
}

.action {
  padding-top: 25px;
  display: flex;
  flex-direction: column;
  align-items: center;
  color: #666;
  font-size: 32px;
  line-height: 40px;
}

.action span {
  margin-top: 11px;
}

.action b {
  height: 60px;
  font-size: 54px;
  line-height: 62px;
  font-weight: 500;
  color: #333;
}

.cancel {
  margin-left: 32px;
}

.optional {
  margin-left: 49px;
}

.others {
  margin-left: 49px;
}

.home-bar {
  position: absolute;
  left: 324px;
  bottom: 2px;
  width: 432px;
  height: 7px;
  border-radius: 4px;
  background: #b9babd;
}
</style>
